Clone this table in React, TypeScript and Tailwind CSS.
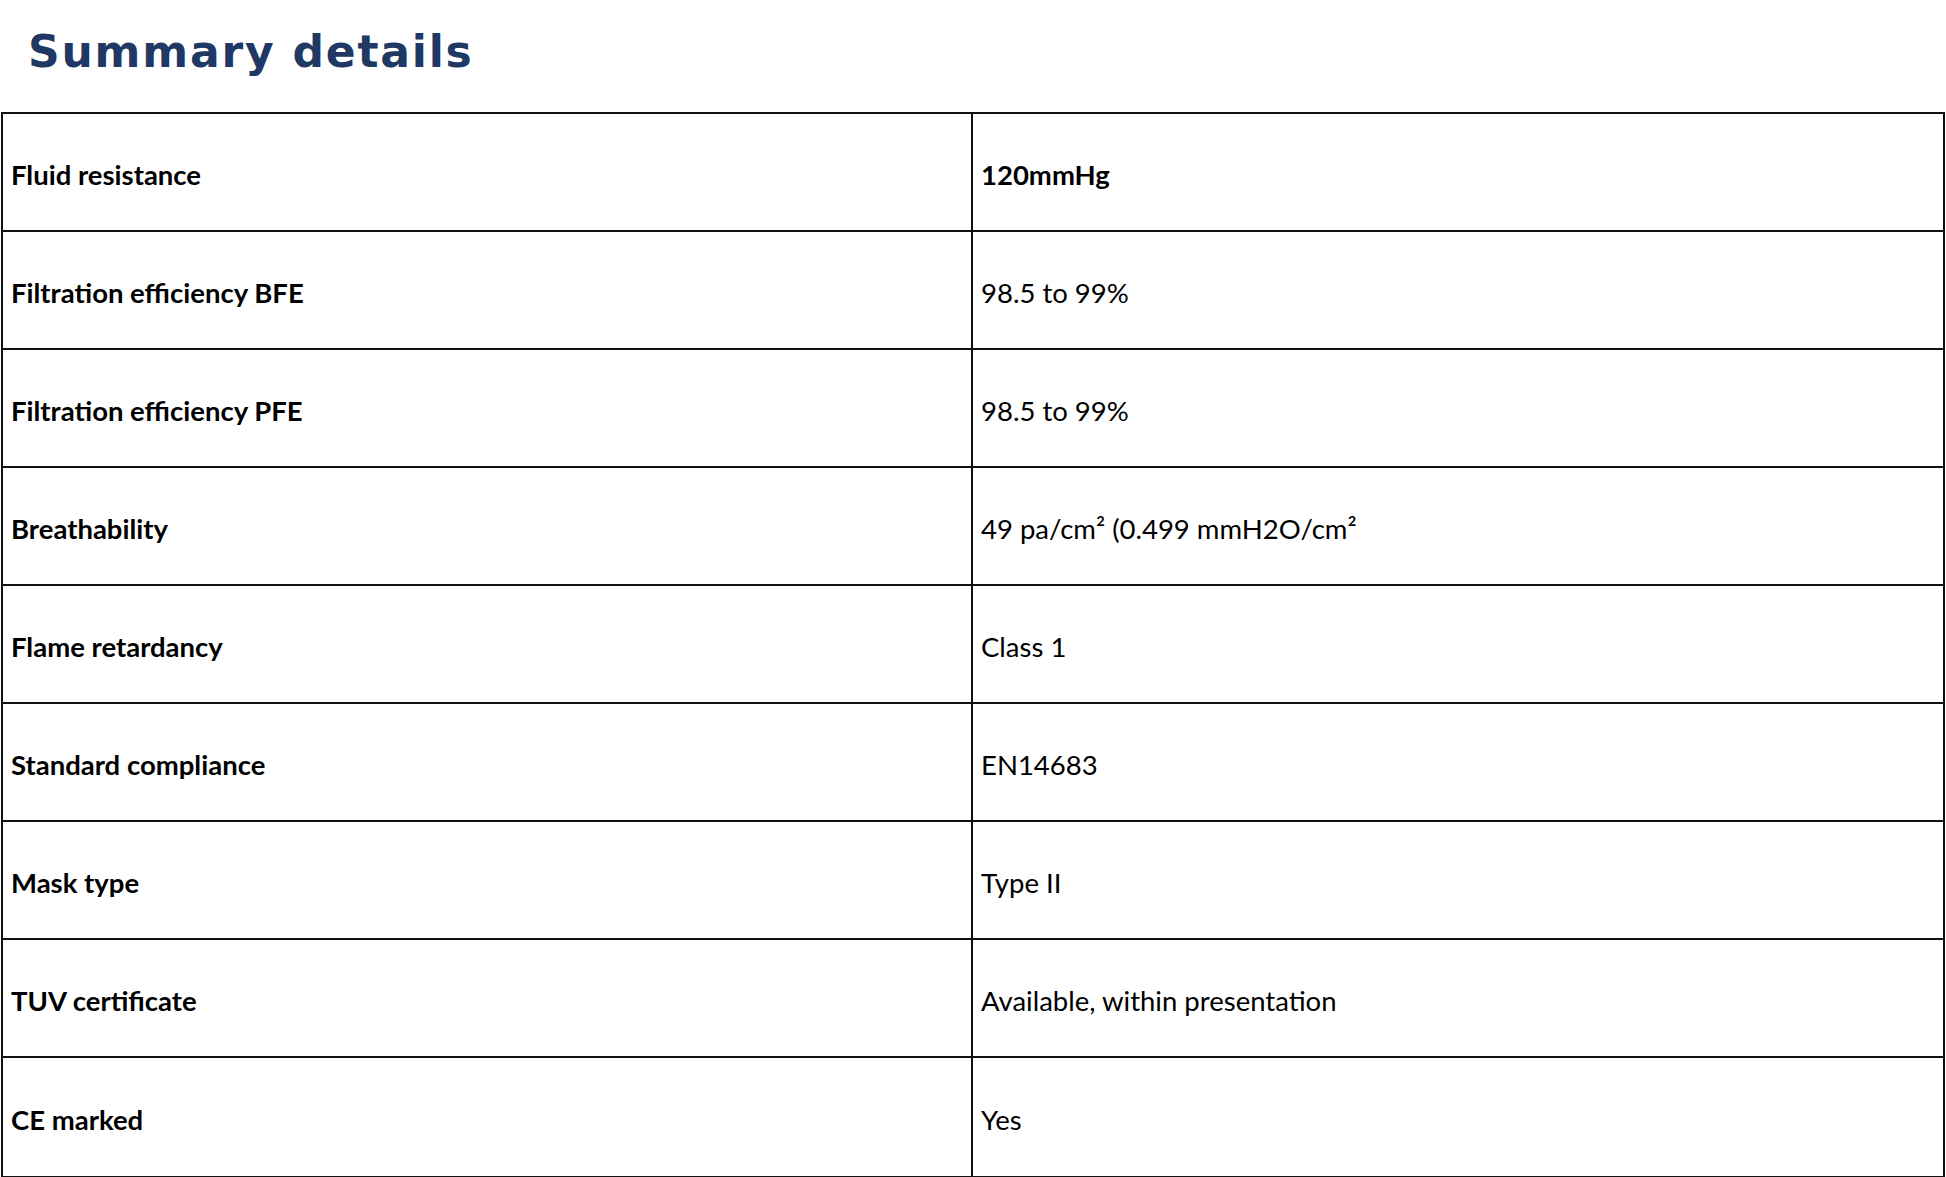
import React from 'react'

type Row = {
  label: string
  value: string
  strong?: boolean
}

const rows: Row[] = [
  { label: 'Fluid resistance', value: '120mmHg', strong: true },
  { label: 'Filtration efficiency BFE', value: '98.5 to 99%' },
  { label: 'Filtration efficiency PFE', value: '98.5 to 99%' },
  { label: 'Breathability', value: '49 pa/cm² (0.499 mmH2O/cm²' },
  { label: 'Flame retardancy', value: 'Class 1' },
  { label: 'Standard compliance', value: 'EN14683' },
  { label: 'Mask type', value: 'Type II' },
  { label: 'TUV certificate', value: 'Available, within presentation' },
  { label: 'CE marked', value: 'Yes' },
]

export default function App() {
  return (
    <div className="w-[1946px] h-[1177px] bg-white overflow-hidden">
      <div className="h-[112px] pl-[28px] pt-[30px]">
        <h1 className="font-['DejaVu_Sans',sans-serif] font-bold text-[44px] leading-none text-[#203864] tracking-[1.8px]">
          Summary details
        </h1>
      </div>

      <div className="mx-px border-2 border-[#111] font-['Lato',sans-serif] text-[27.5px] text-black">
        {rows.map((row, i) => (
          <div
            key={row.label}
            className={`grid grid-cols-[970px_1fr] h-[118px] ${
              i < rows.length - 1 ? 'border-b-2 border-[#111]' : 'h-[116px]'
            }`}
          >
            <div className="flex items-center pl-[8px] pt-[5px] border-r-2 border-[#111] font-bold">
              {row.label}
            </div>
            <div
              className={`flex items-center pl-[8px] pt-[5px] ${
                row.strong ? 'font-bold' : 'font-normal'
              }`}
            >
              {row.value}
            </div>
          </div>
        ))}
      </div>
    </div>
  )
}
